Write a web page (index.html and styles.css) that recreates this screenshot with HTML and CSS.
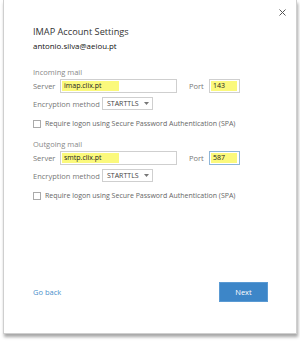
FILE: index.html
```html
<!DOCTYPE html>
<html>
<head>
<meta charset="utf-8">
<link rel="stylesheet" href="styles.css">
</head>
<body>
<div class="dialog">
  <button class="close" aria-label="Close">
    <svg width="7" height="7" viewBox="0 0 7 7"><path d="M0.5 0.5L6.5 6.5M6.5 0.5L0.5 6.5" stroke="#555" stroke-width="1" fill="none"/></svg>
  </button>
  <h1 class="title">IMAP Account Settings</h1>
  <div class="email">antonio.silva@aeiou.pt</div>

  <section class="group">
    <div class="group-title">Incoming mail</div>
    <div class="row server-row">
      <span class="lbl lbl-server">Server</span>
      <div class="input input-server"><span class="hl hl-server">imap.clix.pt</span></div>
      <span class="lbl lbl-port">Port</span>
      <div class="input input-port"><span class="hl hl-port">143</span></div>
    </div>
    <div class="row enc-row">
      <span class="lbl lbl-enc">Encryption method</span>
      <div class="select"><span>STARTTLS</span><svg width="5" height="3" viewBox="0 0 5 3"><path d="M0 0H5L2.5 3Z" fill="#777"/></svg></div>
    </div>
    <label class="check"><span class="box"></span><span>Require logon using Secure Password Authentication (SPA)</span></label>
  </section>

  <section class="group group-out">
    <div class="group-title">Outgoing mail</div>
    <div class="row server-row">
      <span class="lbl lbl-server">Server</span>
      <div class="input input-server"><span class="hl hl-server">smtp.clix.pt</span></div>
      <span class="lbl lbl-port">Port</span>
      <div class="input input-port focused"><span class="hl hl-port">587</span></div>
    </div>
    <div class="row enc-row">
      <span class="lbl lbl-enc">Encryption method</span>
      <div class="select"><span>STARTTLS</span><svg width="5" height="3" viewBox="0 0 5 3"><path d="M0 0H5L2.5 3Z" fill="#777"/></svg></div>
    </div>
    <label class="check"><span class="box"></span><span>Require logon using Secure Password Authentication (SPA)</span></label>
  </section>

  <div class="footer">
    <a class="back" href="#">Go back</a>
    <button class="next">Next</button>
  </div>
</div>
</body>
</html>
```
FILE: styles.css
```css
html, body {
  margin: 0;
  padding: 0;
  background: #fff;
}
body {
  font-family: "Open Sans", "Noto Sans", sans-serif;
  width: 300px;
  height: 343px;
  overflow: hidden;
}
.dialog {
  position: relative;
  box-sizing: border-box;
  margin-left: 3px;
  width: 294px;
  height: 334px;
  border: 1px solid #cfcfcf;
  border-top: none;
  background: #fff;
  box-shadow: 1px 3px 3px rgba(0, 0, 0, 0.35);
  padding: 26px 28px 31px 29px;
  display: flex;
  flex-direction: column;
}
.close {
  position: absolute;
  top: 9px;
  right: 10px;
  padding: 0;
  border: 0;
  background: none;
  width: 7px;
  height: 7px;
  display: flex;
}
.title {
  margin: 0;
  font-size: 9.2px;
  line-height: 12px;
  font-weight: normal;
  color: #333;
}
.email {
  margin-top: 3px;
  font-size: 7.9px;
  line-height: 10px;
  color: #111;
}
.group {
  margin-top: 16px;
}
.group-out {
  margin-top: 10px;
}
.group-title {
  font-size: 7.5px;
  line-height: 10px;
  color: #888;
}
.row {
  display: flex;
  align-items: center;
}
.lbl {
  font-size: 7.5px;
  color: #777;
}
.server-row {
  margin-top: 2px;
  height: 14px;
}
.lbl-server {
  width: 27px;
}
.lbl-port {
  width: 20px;
  margin-left: 12px;
}
.input {
  box-sizing: border-box;
  height: 14px;
  border: 1px solid #cfcfcf;
  padding: 1px;
  display: flex;
}
.input-server {
  width: 117px;
}
.input-port {
  width: 31px;
}
.input.focused {
  border-color: #8fb6d8;
}
.hl {
  background: #fbf97c;
  font-size: 7px;
  line-height: 10px;
  color: #222;
  padding-left: 2px;
  box-sizing: border-box;
}
.hl-server {
  width: 57px;
}
.hl-port {
  width: 26px;
}
.enc-row {
  margin-top: 4px;
  height: 13px;
}
.lbl-enc {
  width: 69px;
}
.select {
  box-sizing: border-box;
  width: 51px;
  height: 13px;
  border: 1px solid #cfcfcf;
  display: flex;
  align-items: center;
  justify-content: space-between;
  padding: 0 3px 0 4px;
  font-size: 7px;
  color: #444;
}
.check {
  margin-top: 8px;
  height: 11px;
  display: flex;
  align-items: center;
  font-size: 7px;
  color: #666;
}
.box {
  box-sizing: border-box;
  width: 8px;
  height: 8px;
  border: 1px solid #aaa;
  margin-right: 4px;
}
.footer {
  margin-top: auto;
  display: flex;
  align-items: center;
  justify-content: space-between;
}
.back {
  font-size: 7.5px;
  color: #4a8fcb;
  text-decoration: none;
}
.next {
  width: 49px;
  height: 20px;
  border: 1px solid #5a9ad3;
  background: #3d86c8;
  color: #fff;
  font-family: "Open Sans", "Noto Sans", sans-serif;
  font-size: 7.5px;
  padding: 0;
}
```
